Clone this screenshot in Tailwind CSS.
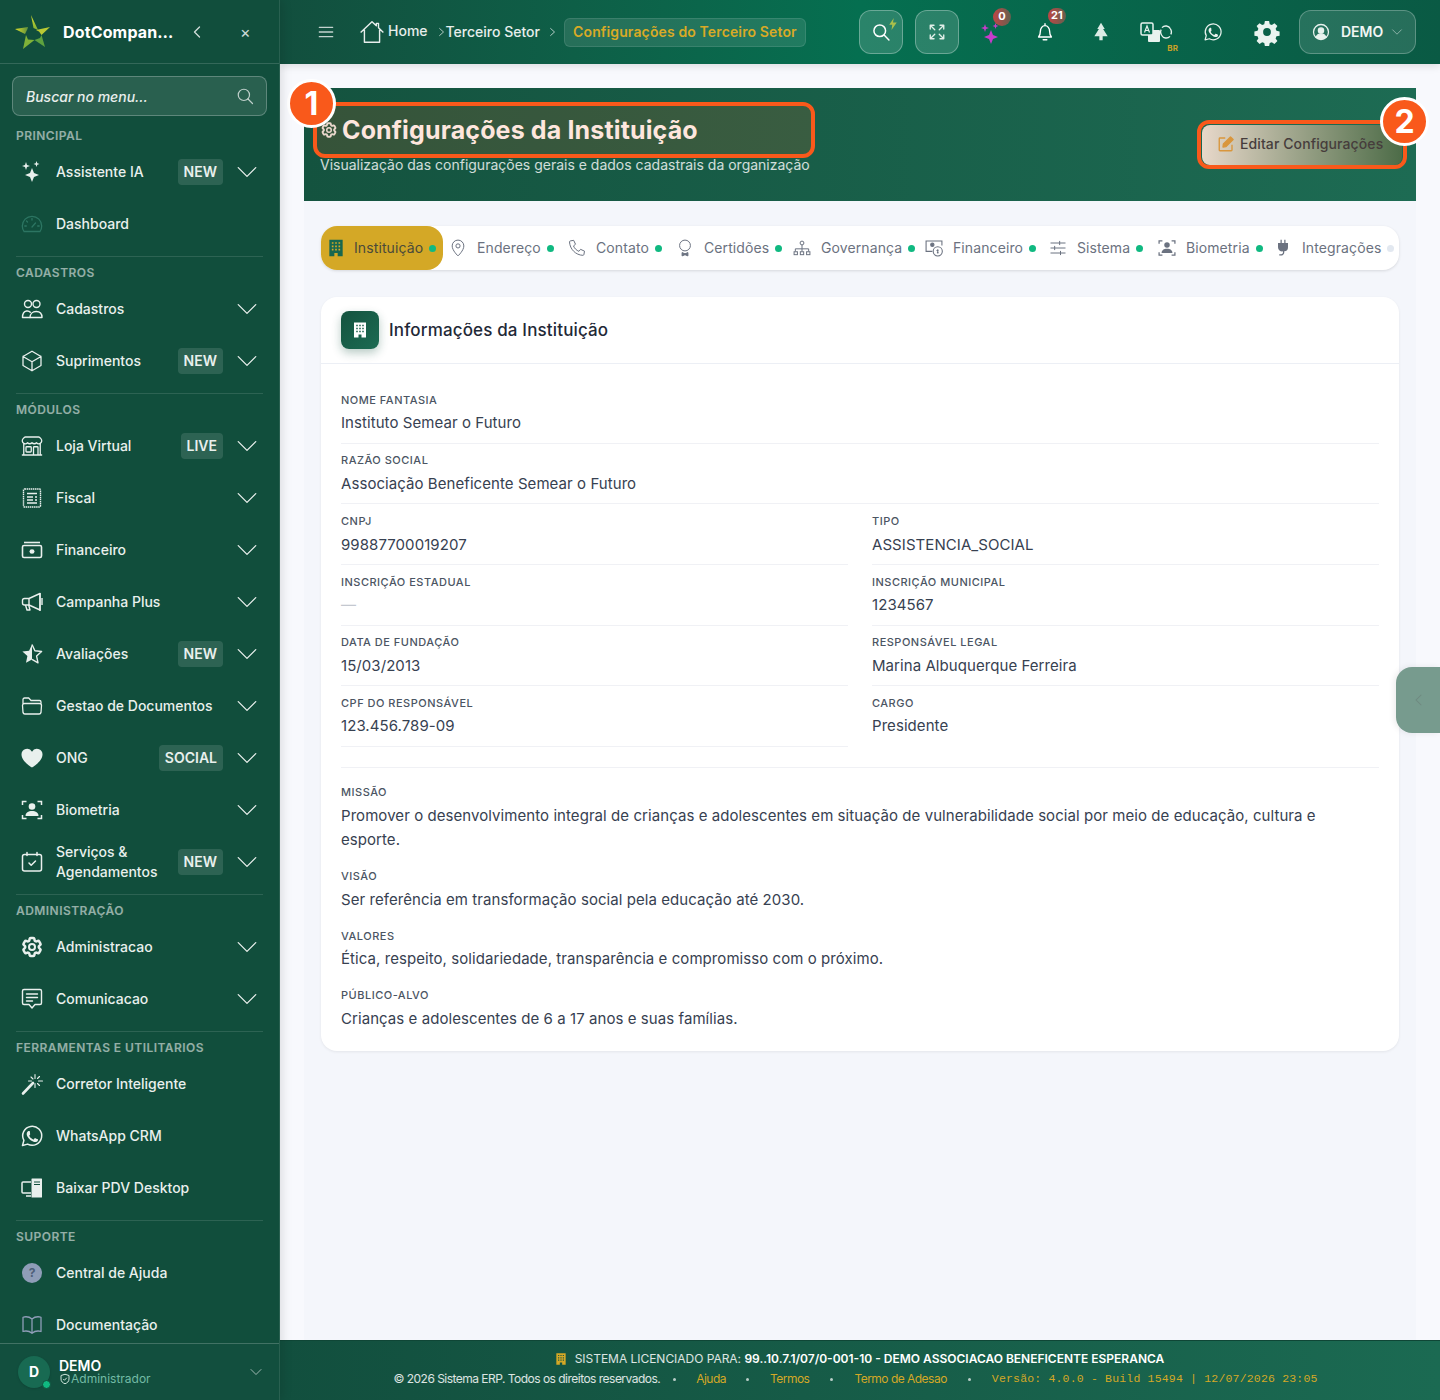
<!DOCTYPE html>
<html lang="pt-BR">
<head>
  <meta charset="UTF-8" />
  <meta name="viewport" content="width=device-width, initial-scale=1.0" />
  <title>Configurações da Instituição</title>
  <script src="https://cdn.jsdelivr.net/npm/@tailwindcss/browser@4"></script>
</head>
<body class="bg-[#f8f9fd] font-['Inter','Liberation_Sans',sans-serif] text-sm">
  <!-- shared icons -->
  <svg class="hidden" xmlns="http://www.w3.org/2000/svg">
    <symbol id="chev" viewBox="0 0 24 24"><path d="M19.5 8.25 12 15.75 4.5 8.25" fill="none" stroke="currentColor" stroke-width="1.1" stroke-linecap="round" stroke-linejoin="round"/></symbol>
    <symbol id="sparkles" viewBox="0 0 24 24"><path fill="currentColor" d="M12 8l2 5 5 2-5 2-2 5-2-5-5-2 5-2zM6 2l1 3 3 1-3 1-1 3-1-3-3-1 3-1zM16.500 1l.8 2.200 2.200.8-2.200.8-.8 2.200-.8-2.200-2.200-.8 2.200-.8z"/></symbol>
    <symbol id="gauge" viewBox="0 0 24 24"><g fill="none" stroke="currentColor" stroke-width="1.3" stroke-linecap="round"><path d="M4 19.500h16c1-1.500 1.700-3.500 1.700-5.500A9.700 9.700 0 0 0 2.300 14c0 2 .7 4 1.700 5.500z"/><path d="M12 15l3.500-4M12 6.500v1.500M6.500 9l1 1M4.800 14h1.500M17.700 14h1.500"/></g></symbol>
    <symbol id="users" viewBox="0 0 24 24"><g fill="none" stroke="currentColor" stroke-width="1.4" stroke-linecap="round" stroke-linejoin="round"><circle cx="8" cy="7" r="3.500"/><circle cx="16.500" cy="7" r="3.500"/><path d="M10 20.500H2.500c0-3 1-6 4-6.500 1.500-.2 3 .2 3.800 1.200"/><path d="M10 20.500c0-3.500 2.500-6 6.200-6 3.800 0 5.800 2.500 5.800 6z"/></g></symbol>
    <symbol id="cube" viewBox="0 0 24 24"><path fill="none" stroke="currentColor" stroke-width="1.3" stroke-linecap="round" stroke-linejoin="round" d="m21 7.500-9-5.250L3 7.500m18 0-9 5.250m9-5.250v9l-9 5.250M3 7.500l9 5.250M3 7.500v9l9 5.250m0-9v9"/></symbol>
    <symbol id="store" viewBox="0 0 24 24"><path fill="none" stroke="currentColor" stroke-width="1.3" stroke-linecap="round" stroke-linejoin="round" d="M13.500 21v-7.500a.75.75 0 0 1 .75-.75h3a.75.75 0 0 1 .75.75V21m-4.500 0H2.360m11.140 0H18m0 0h3.640m-1.390 0V9.349M3.750 21V9.349m0 0a3.001 3.001 0 0 0 3.750-.615A2.993 2.993 0 0 0 9.750 9.750c.896 0 1.700-.393 2.250-1.016a2.993 2.993 0 0 0 2.250 1.016c.896 0 1.700-.393 2.250-1.016a3.001 3.001 0 0 0 3.750.614m-16.500 0a3.004 3.004 0 0 1-.621-4.720l1.189-1.190A1.500 1.500 0 0 1 5.378 3h13.243a1.500 1.500 0 0 1 1.060.44l1.190 1.189a3 3 0 0 1-.621 4.720M6.750 18h3.750a.75.75 0 0 0 .75-.75V13.500a.75.75 0 0 0-.75-.75H6.750a.75.75 0 0 0-.75.75v3.750c0 .414.336.75.75.75Z"/></symbol>
    <symbol id="receipt" viewBox="0 0 24 24"><g fill="none" stroke="currentColor" stroke-width="1.400"><rect x="3.500" y="3" width="17" height="18" rx="1" stroke-dasharray="1.500 .6"/><path d="M7 7.500h10M7 11h6M15 11h2M7 14h6M15 14h2M7 17h10"/></g></symbol>
    <symbol id="cash" viewBox="0 0 24 24"><g fill="none" stroke="currentColor" stroke-width="1.600" stroke-linejoin="round"><rect x="2.500" y="7.500" width="19" height="12" rx="1.500"/><path d="M4 4.500h16"/></g><ellipse cx="12" cy="13.500" rx="2.500" ry="2.300" fill="currentColor"/></symbol>
    <symbol id="mega" viewBox="0 0 24 24"><g fill="none" stroke="currentColor" stroke-width="1.400" stroke-linejoin="round"><path d="M20 3.500 9 8.500H4.500A2 2 0 0 0 2.500 10.500v2.500a2 2 0 0 0 2 2H9l11 5z"/><path d="M9 8.500V15M5.500 15l1.500 5h3l-1.300-5"/><path d="M20 3v18M22 8v7"/></g></symbol>
    <symbol id="starhalf" viewBox="0 0 24 24"><path d="M12 2.500 9.100 8.700 2.400 9.500l5 4.600L6 20.800l6-3.400z" fill="currentColor"/><path d="M12 2.500l2.900 6.200 6.700.8-5 4.600 1.400 6.700-6-3.400" fill="none" stroke="currentColor" stroke-width="1.400" stroke-linejoin="round"/></symbol>
    <symbol id="folder" viewBox="0 0 24 24"><path fill="none" stroke="currentColor" stroke-width="1.300" stroke-linejoin="round" d="M3 10V5.500A1.500 1.500 0 0 1 4.500 4h4.200l2.300 2.500h8.500A1.500 1.500 0 0 1 21 8v2M4.500 9.500h15A2 2 0 0 1 21.500 11.500l-.5 7a2 2 0 0 1-2 1.500H5a2 2 0 0 1-2-1.500l-.5-7a2 2 0 0 1 2-2z"/></symbol>
    <symbol id="heart" viewBox="0 0 24 24"><path fill="currentColor" d="M12 21.500S1.500 15.500 1.500 8.500A5.600 5.600 0 0 1 12 5.700a5.600 5.600 0 0 1 10.500 2.800c0 7-10.500 13-10.500 13z"/></symbol>
    <symbol id="face" viewBox="0 0 24 24"><path fill="none" stroke="currentColor" stroke-width="1.500" d="M2.500 7V3.500h4M17.500 3.500h4V7M2.500 17v3.500h4M17.500 20.500h4V17"/><circle cx="12" cy="8.500" r="3.300" fill="currentColor"/><path fill="currentColor" d="M5.500 18c0-3.300 2.800-5 6.500-5s6.500 1.700 6.500 5z"/></symbol>
    <symbol id="calcheck" viewBox="0 0 24 24"><g fill="none" stroke="currentColor" stroke-width="1.500" stroke-linecap="round" stroke-linejoin="round"><rect x="2.500" y="4.500" width="19" height="16.500" rx="2"/><path d="M7 2.500v3M17 2.500v3M9 13l2.200 2.200L15.500 11"/></g></symbol>
    <symbol id="cog" viewBox="0 0 24 24"><path fill="none" stroke="currentColor" stroke-width="2.500" stroke-linecap="round" stroke-linejoin="round" d="M9.594 3.940c.09-.542.56-.94 1.110-.94h2.593c.55 0 1.020.398 1.110.94l.213 1.281c.063.374.313.686.645.870.074.04.147.083.22.127.325.196.72.257 1.075.124l1.217-.456a1.125 1.125 0 0 1 1.370.49l1.296 2.247a1.125 1.125 0 0 1-.26 1.431l-1.003.827c-.293.241-.438.613-.43.992a7.723 7.723 0 0 1 0 .255c-.008.378.137.75.43.991l1.004.827c.424.35.534.955.26 1.430l-1.298 2.247a1.125 1.125 0 0 1-1.369.491l-1.217-.456c-.355-.133-.75-.072-1.076.124a6.470 6.470 0 0 1-.22.128c-.331.183-.581.495-.644.869l-.213 1.281c-.09.543-.56.94-1.110.94h-2.594c-.55 0-1.019-.398-1.110-.94l-.213-1.281c-.062-.374-.312-.686-.644-.870a6.520 6.520 0 0 1-.22-.127c-.325-.196-.72-.257-1.076-.124l-1.217.456a1.125 1.125 0 0 1-1.369-.49l-1.297-2.247a1.125 1.125 0 0 1 .26-1.431l1.004-.827c.292-.24.437-.613.43-.991a6.932 6.932 0 0 1 0-.255c.007-.38-.138-.751-.43-.992l-1.004-.827a1.125 1.125 0 0 1-.26-1.430l1.297-2.247a1.125 1.125 0 0 1 1.370-.491l1.216.456c.356.133.751.072 1.076-.124.072-.044.146-.086.22-.128.332-.183.582-.495.644-.869l.214-1.280Z"/><circle cx="12" cy="12" r="3" fill="none" stroke="currentColor" stroke-width="2"/></symbol>
    <symbol id="chat" viewBox="0 0 24 24"><g fill="none" stroke="currentColor" stroke-width="1.400" stroke-linecap="round" stroke-linejoin="round"><path d="M4 2.500h16A1.500 1.500 0 0 1 21.500 4v12a1.500 1.500 0 0 1-1.500 1.500h-5L12 21l-3-3.500H4A1.500 1.500 0 0 1 2.500 16V4A1.500 1.500 0 0 1 4 2.500z"/><path d="M6.500 7h11M6.500 10.500h11M6.500 14h6"/></g></symbol>
    <symbol id="wand" viewBox="0 0 24 24"><g stroke="currentColor" stroke-linecap="round"><path d="M3 21.500 13 11" stroke-width="2.600"/><path stroke-width="1.100" fill="none" d="M15 2.500v4M15 11.500v4M8.500 9l3 0M18.500 9h4M11 5l2 2M19.500 4.500 17.500 6.500M17.500 11.500l2 2"/></g></symbol>
    <symbol id="whats" viewBox="0 0 24 24"><path fill="none" stroke="currentColor" stroke-width="1.500" stroke-linejoin="round" d="M2.500 21.500l1.400-5.100A9.500 9.500 0 1 1 7.600 20.100z"/><path fill="currentColor" d="M9 7c-.4 0-.9.100-1.300.6-.5.600-1 1.300-1 2.600s1 2.700 1.100 2.800c.1.200 2 3.100 4.800 4.300 2.300 1 2.800.8 3.300.7.500 0 1.700-.7 1.900-1.300.2-.6.200-1.200.2-1.300-.1-.1-.3-.2-.6-.3-.3-.2-1.700-.8-2-.9-.3-.1-.5-.2-.7.100-.2.300-.8.900-.9 1.100-.2.200-.3.200-.6.100-.3-.2-1.200-.5-2.300-1.400-.9-.8-1.400-1.700-1.600-2-.2-.3 0-.5.100-.6l.4-.5c.1-.2.200-.3.300-.5.100-.2.100-.4 0-.5L9.900 7.500C9.700 7 9.400 7 9 7z"/></symbol>
    <symbol id="pdv" viewBox="0 0 24 24"><path fill="none" stroke="currentColor" stroke-width="1.500" d="M11 6H3a1 1 0 0 0-1 1v9a1 1 0 0 0 1 1h8M6 20h5"/><path fill="currentColor" d="M12 2.500h9.500a.5.5 0 0 1 .5.500v18a.5.5 0 0 1-.5.5H12a.5.5 0 0 1-.5-.5V3a.5.5 0 0 1 .5-.5z"/><path stroke="#114e3c" stroke-width="1" d="M14 6h6M14 8.500h6"/></symbol>
    <symbol id="book" viewBox="0 0 24 24"><path fill="none" stroke="currentColor" stroke-width="1.300" stroke-linecap="round" stroke-linejoin="round" d="M12 6.042A8.967 8.967 0 0 0 6 3.750c-1.052 0-2.062.18-3 .512v14.250A8.987 8.987 0 0 1 6 18c2.305 0 4.408.867 6 2.292m0-14.250a8.966 8.966 0 0 1 6-2.292c1.052 0 2.062.18 3 .512v14.250A8.987 8.987 0 0 0 18 18a8.967 8.967 0 0 0-6 2.292m0-14.250v14.250"/></symbol>
    <symbol id="building" viewBox="0 0 24 24"><path fill="currentColor" fill-rule="evenodd" d="M4 2h16v20h-6v-4h-4v4H4zM7 5v2h2V5zm4 0v2h2V5zm4 0v2h2V5zM7 9v2h2V9zm4 0v2h2V9zm4 0v2h2V9zM7 13v2h2v-2zm4 0v2h2v-2zm4 0v2h2v-2z"/></symbol>
  </svg>

  <div class="flex h-[1400px] w-[1440px] overflow-hidden">
    <!-- sidebar -->
    <aside class="relative z-10 flex w-[280px] shrink-0 flex-col border-r border-white/10 bg-[#114e3c] text-[#e9f0ed] shadow-[2px_0_10px_rgba(0,0,0,0.12)]">
      <div class="flex h-[64px] shrink-0 items-center border-b border-white/15 pl-2">
        <svg class="h-[50px] w-[50px] shrink-0" viewBox="0 0 50 50">
          <defs>
            <linearGradient id="logoA" x1="0" y1="0" x2="0" y2="1"><stop offset="0" stop-color="#dfe02a"/><stop offset="1" stop-color="#7fae35"/></linearGradient>
            <linearGradient id="logoB" x1="0" y1="0" x2="1" y2="0"><stop offset="0" stop-color="#dfe02a"/><stop offset="1" stop-color="#5c8f3c"/></linearGradient>
          </defs>
          <path fill="url(#logoA)" d="M23 8 30 23 25.500 21z"/>
          <path fill="url(#logoB)" d="M7 22 20 20 19.500 22 17 27z"/>
          <path fill="#b9c934" d="M42 20 28 23 31 24.500 33.500 28z"/>
          <path fill="#5ea23f" d="M37 40 33.500 28 32 31 26.500 33z"/>
          <path fill="#7fb238" d="M15 42 26.500 33 20 32.500 18 28z"/>
        </svg>
        <span class="ml-[5px] w-[112px] text-base font-bold tracking-[0.15px] whitespace-nowrap text-white">DotCompan…</span>
        <svg class="ml-[14px] h-4 w-4 text-white/80" viewBox="0 0 24 24" fill="none" stroke="currentColor" stroke-width="2" stroke-linecap="round" stroke-linejoin="round"><path d="M15.750 19.500 8.250 12l7.500-7.500"/></svg>
        <span class="ml-[35px] text-base leading-none text-white/80">×</span>
      </div>

      <div class="mx-3 mt-3 flex h-10 shrink-0 items-center justify-between rounded-lg border border-white/25 bg-white/10 pr-3 pl-[13px]">
        <span class="pt-px text-sm font-medium text-white/90 italic">Buscar no menu...</span>
        <svg class="h-[18px] w-[18px] text-white/70" viewBox="0 0 24 24" fill="none" stroke="currentColor" stroke-width="1.600" stroke-linecap="round"><circle cx="10.500" cy="10.500" r="7.500"/><path d="m16 16 6 6"/></svg>
      </div>

      <nav class="min-h-0 flex-1 overflow-hidden text-sm font-medium">
        <p class="ml-4 mt-3 h-[16px] text-xs leading-4 font-semibold tracking-[0.45px] text-white/55">PRINCIPAL</p>
        <div class="mt-[2px] flex h-[52px] items-center pl-5 pr-[23px]">
          <svg class="mr-3 h-6 w-6 shrink-0"><use href="#sparkles"/></svg><span class="flex-1">Assistente IA</span>
          <span class="mr-[10px] rounded bg-white/12 px-[6px] py-[3px] leading-5 font-semibold">NEW</span><svg class="h-[28px] w-[28px] shrink-0 -mr-[5px]"><use href="#chev"/></svg>
        </div>
        <div class="flex h-[52px] items-center pl-5 pr-[23px]">
          <svg class="mr-3 h-6 w-6 shrink-0 text-[#2c7562]"><use href="#gauge"/></svg><span>Dashboard</span>
        </div>

        <div class="mx-4 mt-[6px] border-t border-white/12 pt-2"><p class="h-[16px] text-xs leading-4 font-semibold tracking-[0.45px] text-white/55">CADASTROS</p></div>
        <div class="mt-[2px] flex h-[52px] items-center pl-5 pr-[23px]">
          <svg class="mr-3 h-6 w-6 shrink-0"><use href="#users"/></svg><span class="flex-1">Cadastros</span>
          <svg class="h-[28px] w-[28px] shrink-0 -mr-[5px]"><use href="#chev"/></svg>
        </div>
        <div class="flex h-[52px] items-center pl-5 pr-[23px]">
          <svg class="mr-3 h-6 w-6 shrink-0"><use href="#cube"/></svg><span class="flex-1">Suprimentos</span>
          <span class="mr-[10px] rounded bg-white/12 px-[6px] py-[3px] leading-5 font-semibold">NEW</span><svg class="h-[28px] w-[28px] shrink-0 -mr-[5px]"><use href="#chev"/></svg>
        </div>

        <div class="mx-4 mt-[6px] border-t border-white/12 pt-2"><p class="h-[16px] text-xs leading-4 font-semibold tracking-[0.45px] text-white/55">MÓDULOS</p></div>
        <div class="mt-[2px] flex h-[52px] items-center pl-5 pr-[23px]">
          <svg class="mr-3 h-6 w-6 shrink-0"><use href="#store"/></svg><span class="flex-1">Loja Virtual</span>
          <span class="mr-[10px] rounded bg-white/12 px-[6px] py-[3px] leading-5 font-semibold">LIVE</span><svg class="h-[28px] w-[28px] shrink-0 -mr-[5px]"><use href="#chev"/></svg>
        </div>
        <div class="flex h-[52px] items-center pl-5 pr-[23px]">
          <svg class="mr-3 h-6 w-6 shrink-0"><use href="#receipt"/></svg><span class="flex-1">Fiscal</span>
          <svg class="h-[28px] w-[28px] shrink-0 -mr-[5px]"><use href="#chev"/></svg>
        </div>
        <div class="flex h-[52px] items-center pl-5 pr-[23px]">
          <svg class="mr-3 h-6 w-6 shrink-0"><use href="#cash"/></svg><span class="flex-1">Financeiro</span>
          <svg class="h-[28px] w-[28px] shrink-0 -mr-[5px]"><use href="#chev"/></svg>
        </div>
        <div class="flex h-[52px] items-center pl-5 pr-[23px]">
          <svg class="mr-3 h-6 w-6 shrink-0"><use href="#mega"/></svg><span class="flex-1">Campanha Plus</span>
          <svg class="h-[28px] w-[28px] shrink-0 -mr-[5px]"><use href="#chev"/></svg>
        </div>
        <div class="flex h-[52px] items-center pl-5 pr-[23px]">
          <svg class="mr-3 h-6 w-6 shrink-0"><use href="#starhalf"/></svg><span class="flex-1">Avaliações</span>
          <span class="mr-[10px] rounded bg-white/12 px-[6px] py-[3px] leading-5 font-semibold">NEW</span><svg class="h-[28px] w-[28px] shrink-0 -mr-[5px]"><use href="#chev"/></svg>
        </div>
        <div class="flex h-[52px] items-center pl-5 pr-[23px]">
          <svg class="mr-3 h-6 w-6 shrink-0"><use href="#folder"/></svg><span class="flex-1">Gestao de Documentos</span>
          <svg class="h-[28px] w-[28px] shrink-0 -mr-[5px]"><use href="#chev"/></svg>
        </div>
        <div class="flex h-[52px] items-center pl-5 pr-[23px]">
          <svg class="mr-3 h-6 w-6 shrink-0"><use href="#heart"/></svg><span class="flex-1">ONG</span>
          <span class="mr-[10px] rounded bg-white/12 px-[6px] py-[3px] leading-5 font-semibold">SOCIAL</span><svg class="h-[28px] w-[28px] shrink-0 -mr-[5px]"><use href="#chev"/></svg>
        </div>
        <div class="flex h-[52px] items-center pl-5 pr-[23px]">
          <svg class="mr-3 h-6 w-6 shrink-0"><use href="#face"/></svg><span class="flex-1">Biometria</span>
          <svg class="h-[28px] w-[28px] shrink-0 -mr-[5px]"><use href="#chev"/></svg>
        </div>
        <div class="flex h-[52px] items-center pl-5 pr-[23px]">
          <svg class="mr-3 h-6 w-6 shrink-0"><use href="#calcheck"/></svg><span class="flex-1 leading-5">Serviços &amp;<br>Agendamentos</span>
          <span class="mr-[10px] rounded bg-white/12 px-[6px] py-[3px] leading-5 font-semibold">NEW</span><svg class="h-[28px] w-[28px] shrink-0 -mr-[5px]"><use href="#chev"/></svg>
        </div>

        <div class="mx-4 mt-[6px] border-t border-white/12 pt-2"><p class="h-[16px] text-xs leading-4 font-semibold tracking-[0.45px] text-white/55">ADMINISTRAÇÃO</p></div>
        <div class="mt-[2px] flex h-[52px] items-center pl-5 pr-[23px]">
          <svg class="mr-3 h-6 w-6 shrink-0"><use href="#cog"/></svg><span class="flex-1">Administracao</span>
          <svg class="h-[28px] w-[28px] shrink-0 -mr-[5px]"><use href="#chev"/></svg>
        </div>
        <div class="flex h-[52px] items-center pl-5 pr-[23px]">
          <svg class="mr-3 h-6 w-6 shrink-0"><use href="#chat"/></svg><span class="flex-1">Comunicacao</span>
          <svg class="h-[28px] w-[28px] shrink-0 -mr-[5px]"><use href="#chev"/></svg>
        </div>

        <div class="mx-4 mt-[6px] border-t border-white/12 pt-2"><p class="h-[16px] text-xs leading-4 font-semibold tracking-[0.45px] text-white/55">FERRAMENTAS E UTILITARIOS</p></div>
        <div class="mt-[2px] flex h-[52px] items-center pl-5 pr-[23px]">
          <svg class="mr-3 h-6 w-6 shrink-0"><use href="#wand"/></svg><span>Corretor Inteligente</span>
        </div>
        <div class="flex h-[52px] items-center pl-5 pr-[23px]">
          <svg class="mr-3 h-6 w-6 shrink-0"><use href="#whats"/></svg><span>WhatsApp CRM</span>
        </div>
        <div class="flex h-[52px] items-center pl-5 pr-[23px]">
          <svg class="mr-3 h-6 w-6 shrink-0"><use href="#pdv"/></svg><span>Baixar PDV Desktop</span>
        </div>

        <div class="mx-4 mt-[6px] border-t border-white/12 pt-2"><p class="h-[16px] text-xs leading-4 font-semibold tracking-[0.45px] text-white/55">SUPORTE</p></div>
        <div class="mt-[2px] flex h-[52px] items-center pl-5 pr-[23px]">
          <span class="ml-[2px] mr-[14px] flex h-5 w-5 shrink-0 items-center justify-center rounded-full bg-[#8f9db8] text-xs font-bold text-[#4e5f78]">?</span><span>Central de Ajuda</span>
        </div>
        <div class="flex h-[52px] items-center pl-5 pr-[23px]">
          <svg class="mr-3 h-6 w-6 shrink-0 text-[#8f9db8]"><use href="#book"/></svg><span>Documentação</span>
        </div>
      </nav>

      <div class="flex h-[57px] shrink-0 items-center border-t border-white/20 bg-[#124f3e] pl-[18px] pr-[15px]">
        <div class="relative flex h-8 w-8 shrink-0 items-center justify-center rounded-full bg-[#186a52] text-sm font-bold text-white shadow">D
          <span class="absolute -right-[1px] -bottom-[1px] h-[9px] w-[9px] rounded-full border border-[#114e3c] bg-[#10b981]"></span>
        </div>
        <div class="ml-[9px] flex-1">
          <p class="text-sm leading-[14px] font-semibold text-white">DEMO</p>
          <p class="flex items-center text-xs leading-[12px] text-[#73bba5]"><svg class="h-3 w-3 text-[#cfe6dd]" viewBox="0 0 24 24" fill="none" stroke="currentColor" stroke-width="2" stroke-linejoin="round"><path d="M12 2.500 4 5v7c0 5 3.500 8 8 9.500 4.500-1.500 8-4.500 8-9.500V5z"/><path d="m8.500 12 2.500 2.500 4.500-5"/></svg>Administrador</p>
        </div>
        <svg class="h-4 w-4 text-white/80"><use href="#chev"/></svg>
      </div>
    </aside>

    <!-- right column -->
    <div class="flex min-w-0 flex-1 flex-col">
      <header class="relative z-[5] flex h-[64px] shrink-0 items-center bg-linear-to-r from-[#124f3e] via-[#056f50] to-[#0a5a44] pl-[38px] text-white shadow-[0_2px_8px_rgba(0,0,0,0.12)]">
        <svg class="h-[16px] w-[16px] text-white/75" viewBox="0 0 24 24" fill="none" stroke="currentColor" stroke-width="2" stroke-linecap="round"><path d="M2 5h20M2 12h20M2 19h20"/></svg>
        <svg class="ml-[25px] h-[26px] w-[26px] text-white/90" viewBox="0 0 24 24" fill="none" stroke="currentColor" stroke-width="1.300" stroke-linejoin="round"><path d="M1.500 12.500 12 2.500l4 3.800V4h2v4.100l4.500 4.400M5 10v11.500h14V10"/></svg>
        <span class="-mt-[3px] ml-[3px] font-medium text-white/90">Home</span>
        <svg class="ml-2 h-[10px] w-[10px] text-white/80" viewBox="0 0 24 24" fill="none" stroke="currentColor" stroke-width="2"><path d="m8 3 10 9-10 9"/></svg>
        <span class="-mt-px font-medium text-white/90">Terceiro Setor</span>
        <svg class="ml-[7px] h-[10px] w-[10px] text-white/80" viewBox="0 0 24 24" fill="none" stroke="currentColor" stroke-width="2"><path d="m8 3 10 9-10 9"/></svg>
        <span class="ml-[7px] flex h-[29px] w-[242px] items-center justify-center rounded-md border border-white/10 bg-white/10 font-semibold tracking-[0.13px] text-[#d9aa26]">Configurações do Terceiro Setor</span>

        <div class="relative ml-[53px] flex h-[44px] w-[44px] items-center justify-center rounded-xl border border-white/30 bg-white/15">
          <svg class="h-5 w-5" viewBox="0 0 24 24" fill="none" stroke="currentColor" stroke-width="1.800" stroke-linecap="round"><circle cx="10.500" cy="10.500" r="7"/><path d="m16 16 5.500 5.500"/></svg>
          <svg class="absolute top-[7px] right-[5px] h-3 w-2" viewBox="0 0 10 16" fill="#a9bf4b"><path d="M6 0 0 9h4l-1 7 7-10H5z"/></svg>
        </div>
        <div class="ml-[12px] flex h-[44px] w-[44px] items-center justify-center rounded-xl border border-white/30 bg-white/15">
          <svg class="h-[18px] w-[18px] text-[#e3efe9]" viewBox="0 0 24 24" fill="none" stroke="currentColor" stroke-width="1.800" stroke-linecap="round" stroke-linejoin="round"><path d="M3 8V3h5M3 3l6 6M21 8V3h-5M21 3l-6 6M3 16v5h5M3 21l6-6M21 16v5h-5M21 21l-6-6"/></svg>
        </div>
        <div class="relative ml-[20px] h-[44px] w-[30px]">
          <svg class="absolute top-[12px] left-0 h-[24px] w-[24px] text-[#c73ccb]"><use href="#sparkles"/></svg>
          <span class="absolute -top-[2px] left-[14px] flex h-[18px] w-[18px] items-center justify-center rounded-full bg-linear-to-r from-[#c04545] to-[#a05a50]/60 text-[11px] font-bold">0</span>
        </div>
        <div class="relative ml-[25px] flex h-[44px] w-[22px] items-center justify-center">
          <svg class="h-[22px] w-[22px]" viewBox="0 0 24 24" fill="none" stroke="currentColor" stroke-width="1.500" stroke-linecap="round" stroke-linejoin="round"><path d="M5 17.500h14c-1.300-1.500-2-2.500-2-6.500 0-3-2-6-5-6s-5 3-5 6c0 4-.7 5-2 6.500zM10 20.500h4M12 3v2"/></svg>
          <span class="absolute -top-[2px] left-[14px] flex h-[16px] w-[18px] items-center justify-center rounded-full bg-linear-to-r from-[#c04545] to-[#a05a50]/60 text-[11px] font-bold">21</span>
        </div>
        <svg class="ml-[35px] h-[20px] w-[20px] text-[#dcebe5]" viewBox="0 0 24 24" fill="currentColor"><path d="M12 1 7.500 8.500h2L4 17h6v5h4v-5h6l-5.500-8.500h2z"/></svg>
        <div class="relative ml-[29px] flex h-[44px] w-[34px] items-center">
          <svg class="h-[20px] w-[20px] shrink-0" viewBox="0 0 20 20" fill="none"><path fill="#e8f2ee" d="M8 8h11a1 1 0 0 1 1 1v10a1 1 0 0 1-1 1H9a1 1 0 0 1-1-1z"/><rect x="1" y="1" width="12" height="12" rx="1.500" fill="#066a4e" stroke="#e8f2ee" stroke-width="1.500"/><path d="M4.500 10.500 7 4l2.500 6.500M5.500 8.500h3" stroke="#e8f2ee" stroke-width="1.200"/></svg>
          <svg class="-ml-[1px] h-[16px] w-[14px] shrink-0 text-[#e8f2ee]" viewBox="0 0 16 20" fill="none" stroke="currentColor" stroke-width="1.700"><path d="M13.500 6A6.500 6.500 0 0 0 3 4.500M2.500 14A6.500 6.500 0 0 0 13 15.500M2 7a7 7 0 0 0 .5 7M14 13a7 7 0 0 0-.5-7"/></svg>
          <span class="absolute -right-[4px] bottom-[2px] text-[8px] leading-none font-bold text-[#c9a227]">BR</span>
        </div>
        <svg class="ml-[29px] h-[20px] w-[20px] text-[#e8f2ee]"><use href="#whats"/></svg>
        <svg class="ml-[30px] h-[28px] w-[28px] text-[#eaf3ef]" viewBox="0 0 24 24" fill="currentColor"><path fill-rule="evenodd" d="M10 1.500h4l.6 3 2 .8 2.500-1.700 2.800 2.800-1.700 2.500.8 2 3 .6v4l-3 .6-.8 2 1.700 2.500-2.800 2.800-2.500-1.700-2 .8-.6 3h-4l-.6-3-2-.8-2.500 1.700-2.800-2.800 1.700-2.500-.8-2-3-.6v-4l3-.6.8-2-1.700-2.500 2.800-2.800 2.500 1.700 2-.8zM12 8.300a3.700 3.700 0 1 0 0 7.400 3.700 3.700 0 0 0 0-7.400z" transform="translate(1.200 1.200) scale(.9)"/></svg>
        <div class="ml-[18px] flex h-[44px] w-[117px] items-center rounded-xl border border-white/25 bg-white/12 pl-[12px]">
          <svg class="h-[18px] w-[18px] text-[#e8f2ee]" viewBox="0 0 24 24" fill="none" stroke="currentColor" stroke-width="1.700"><circle cx="12" cy="12" r="10"/><circle cx="12" cy="10" r="3.500" fill="currentColor"/><path fill="currentColor" d="M5.500 19c1-3 3.500-4.500 6.500-4.500s5.500 1.500 6.500 4.500c-2 1.500-4 2.200-6.500 2.200s-4.500-.7-6.500-2.200z"/></svg>
          <span class="ml-[11px] font-semibold text-[#f1f6f4]">DEMO</span>
          <svg class="ml-[7px] h-[14px] w-[14px] text-white/70"><use href="#chev"/></svg>
        </div>
      </header>

      <main class="flex min-h-0 flex-1 flex-col pt-6">
        <section class="relative mx-6 flex h-[113px] shrink-0 justify-between bg-linear-to-r from-[#14533f] to-[#1d6b53] pl-4 text-white">
          <div class="mt-[27px]">
            <div class="flex h-[30px] items-center">
              <svg class="h-[18px] w-[18px] text-white/90"><use href="#cog"/></svg>
              <h1 class="ml-1 text-[25px] leading-[30px] font-bold tracking-[0.14px]">Configurações da Instituição</h1>
            </div>
            <p class="mt-[10px] leading-5 text-white/80">Visualização das configurações gerais e dados cadastrais da organização</p>
          </div>
          <div class="mt-[37px] mr-[14px] flex h-10 w-[200px] items-center rounded-lg bg-linear-to-r from-[#e8d8ca] to-[#4d6c48] pb-[2px] pl-[15px] font-medium tracking-[0.1px] text-[#463d3c]">
            <svg class="h-[18px] w-[18px] text-[#d9963c]" viewBox="0 0 24 24" fill="none" stroke="currentColor" stroke-width="1.800" stroke-linejoin="round"><path d="M11 4H4a1 1 0 0 0-1 1v15a1 1 0 0 0 1 1h15a1 1 0 0 0 1-1v-7"/><path d="M18 2.500 21.500 6 12 15.500l-4 .5.500-4z" fill="currentColor"/></svg>
            <span class="ml-[5px] whitespace-nowrap">Editar Configurações</span>
          </div>
          <!-- annotations -->
          <div class="absolute top-[14px] left-[9px] h-[56px] w-[502px] rounded-xl border-4 border-[#f9591b] bg-[#f9591b]/15"></div>
          <div class="absolute top-[32px] right-[9px] h-[49px] w-[210px] rounded-xl border-4 border-[#f9591b]"></div>
          <span class="absolute -top-[9px] -left-[17px] flex h-[49px] w-[49px] items-center justify-center rounded-full border-[3px] border-white bg-[#f9591b] text-[32px] leading-none font-bold text-white">1</span>
          <span class="absolute top-[9px] -right-[13px] flex h-[49px] w-[49px] items-center justify-center rounded-full border-[3px] border-white bg-[#f9591b] text-[32px] leading-none font-bold text-white">2</span>
        </section>

        <div class="mx-6 min-h-0 flex-1 bg-[#f4f6fb] px-[17px] pt-[25px]">
          <!-- tabs -->
          <div class="flex h-[44px] rounded-2xl bg-white tracking-[0.1px] text-[#6b7280] shadow-[0_1px_3px_rgba(0,0,0,0.12)]">
            <div class="flex h-[44px] w-[122px] items-center rounded-2xl bg-[#d4a826] pl-[5px] text-[#4a4a3a]">
              <svg class="h-5 w-5 text-[#17674f]"><use href="#building"/></svg><span class="ml-2">Instituição</span><span class="ml-[6px] h-[7px] w-[7px] rounded-full bg-[#10b981]"></span>
            </div>
            <div class="flex w-[119px] items-center pl-[5px]">
              <svg class="h-5 w-5" viewBox="0 0 24 24" fill="none" stroke="currentColor" stroke-width="1.200"><path d="M12 21.500s-7-6.500-7-12a7 7 0 0 1 14 0c0 5.500-7 12-7 12z"/><circle cx="12" cy="9.500" r="2.500"/></svg><span class="ml-[9px]">Endereço</span><span class="ml-[6px] h-[7px] w-[7px] rounded-full bg-[#10b981]"></span>
            </div>
            <div class="flex w-[108px] items-center pl-[5px]">
              <svg class="h-5 w-5" viewBox="0 0 24 24" fill="none" stroke="currentColor" stroke-width="1.200" stroke-linejoin="round"><path d="M4 3.500 8 2.800l2.200 4.700-2.400 2c1.200 3 3.500 5.300 6.500 6.500l2-2.400 4.700 2.200-.7 4c-.1.600-.6 1-1.200 1C10.500 20.500 3.500 13.500 3 4.700c0-.6.400-1.100 1-1.200z"/></svg><span class="ml-[9px]">Contato</span><span class="ml-[6px] h-[7px] w-[7px] rounded-full bg-[#10b981]"></span>
            </div>
            <div class="flex w-[117px] items-center pl-[5px]">
              <svg class="h-5 w-5" viewBox="0 0 24 24" fill="none" stroke="currentColor" stroke-width="1.200"><circle cx="12" cy="9" r="6.500"/><path fill="currentColor" d="M8.500 17.500 12 19l3.500-1.500v4L12 20l-3.500 1.500z"/></svg><span class="ml-[9px]">Certidões</span><span class="ml-[6px] h-[7px] w-[7px] rounded-full bg-[#10b981]"></span>
            </div>
            <div class="flex w-[132px] items-center pl-[5px]">
              <svg class="h-5 w-5" viewBox="0 0 24 24" fill="none" stroke="currentColor" stroke-width="1.200"><circle cx="12" cy="6" r="2.300"/><path d="M12 8.300V13M4 16v-3h16v3M12 13v3"/><rect x="2.500" y="16.500" width="4" height="3.500"/><rect x="10" y="16.500" width="4" height="3.500"/><rect x="17.500" y="16.500" width="4" height="3.500"/></svg><span class="ml-[9px]">Governança</span><span class="ml-[6px] h-[7px] w-[7px] rounded-full bg-[#10b981]"></span>
            </div>
            <div class="flex w-[124px] items-center pl-[5px]">
              <svg class="h-5 w-5" viewBox="0 0 24 24" fill="none" stroke="currentColor" stroke-width="1.300"><path d="M10 16H2.500V3.500h19V9" /><circle cx="10" cy="8" r="2" fill="currentColor"/><circle cx="16.500" cy="16" r="5.500"/><path d="M16.500 13.500v5M15 15h2.500M15.500 17.500h2"/></svg><span class="ml-[9px]">Financeiro</span><span class="ml-[6px] h-[7px] w-[7px] rounded-full bg-[#10b981]"></span>
            </div>
            <div class="flex w-[109px] items-center pl-[5px]">
              <svg class="h-5 w-5" viewBox="0 0 24 24" fill="none" stroke="currentColor" stroke-width="1.200"><path d="M3 6h18M3 12h18M3 18h18M14 3.500v5M8 9.500v5M15 15.500v5"/></svg><span class="ml-[9px]">Sistema</span><span class="ml-[6px] h-[7px] w-[7px] rounded-full bg-[#10b981]"></span>
            </div>
            <div class="flex w-[116px] items-center pl-[5px]">
              <svg class="h-5 w-5"><use href="#face"/></svg><span class="ml-[9px]">Biometria</span><span class="ml-[6px] h-[7px] w-[7px] rounded-full bg-[#10b981]"></span>
            </div>
            <div class="flex items-center pl-[5px]">
              <svg class="h-5 w-5" viewBox="0 0 24 24" fill="currentColor"><path d="M9 2h1.500v4h3V2H15v4h3v5a5 5 0 0 1-4.500 5v1.500c0 2-1.500 3.500-3.500 3.500H7.500v-1.500H10c1 0 2-1 2-2V16a5 5 0 0 1-6-5V6h3z"/></svg><span class="ml-[9px]">Integrações</span><span class="ml-[6px] h-[7px] w-[7px] rounded-full bg-[#e2e8f0]"></span>
            </div>
          </div>

          <!-- info card -->
          <div class="mt-[27px] h-[754px] rounded-2xl bg-white shadow-[0_1px_3px_rgba(0,0,0,0.07)]">
            <div class="flex h-[67px] items-center border-b border-[#eceff5] pl-5">
              <div class="flex h-[38px] w-[38px] items-center justify-center rounded-lg bg-linear-to-br from-[#14533f] to-[#1d6b53] text-white shadow-[0_4px_10px_rgba(20,83,63,0.3)]">
                <svg class="h-[18px] w-[18px]"><use href="#building"/></svg>
              </div>
              <h2 class="ml-[10px] text-[17px] font-medium tracking-[0.15px] text-[#1f2937]">Informações da Instituição</h2>
            </div>

            <div class="px-5 pt-[28.7px] text-[15px] leading-6 tracking-[0.065px] text-[#374151]">
              <div class="grid auto-rows-[60.67px] grid-cols-2 gap-x-6">
                <div class="col-span-2">
                  <p class="h-[15px] text-[11px] leading-[15px] font-medium tracking-[0.5px] text-[#4b5563] uppercase">Nome Fantasia</p>
                  <p class="mt-[3.5px] h-[32.5px] border-b border-[#f0f1f5]">Instituto Semear o Futuro</p>
                </div>
                <div class="col-span-2">
                  <p class="h-[15px] text-[11px] leading-[15px] font-medium tracking-[0.5px] text-[#4b5563] uppercase">Razão Social</p>
                  <p class="mt-[3.5px] h-[32.5px] border-b border-[#f0f1f5]">Associação Beneficente Semear o Futuro</p>
                </div>
                <div>
                  <p class="h-[15px] text-[11px] leading-[15px] font-medium tracking-[0.5px] text-[#4b5563] uppercase">CNPJ</p>
                  <p class="mt-[3.5px] h-[32.5px] border-b border-[#f0f1f5]">99887700019207</p>
                </div>
                <div>
                  <p class="h-[15px] text-[11px] leading-[15px] font-medium tracking-[0.5px] text-[#4b5563] uppercase">Tipo</p>
                  <p class="mt-[3.5px] h-[32.5px] border-b border-[#f0f1f5]">ASSISTENCIA_SOCIAL</p>
                </div>
                <div>
                  <p class="h-[15px] text-[11px] leading-[15px] font-medium tracking-[0.5px] text-[#4b5563] uppercase">Inscrição Estadual</p>
                  <p class="mt-[3.5px] h-[32.5px] border-b border-[#f0f1f5] text-[#c4c8d0]">—</p>
                </div>
                <div>
                  <p class="h-[15px] text-[11px] leading-[15px] font-medium tracking-[0.5px] text-[#4b5563] uppercase">Inscrição Municipal</p>
                  <p class="mt-[3.5px] h-[32.5px] border-b border-[#f0f1f5]">1234567</p>
                </div>
                <div>
                  <p class="h-[15px] text-[11px] leading-[15px] font-medium tracking-[0.5px] text-[#4b5563] uppercase">Data de Fundação</p>
                  <p class="mt-[3.5px] h-[32.5px] border-b border-[#f0f1f5]">15/03/2013</p>
                </div>
                <div>
                  <p class="h-[15px] text-[11px] leading-[15px] font-medium tracking-[0.5px] text-[#4b5563] uppercase">Responsável Legal</p>
                  <p class="mt-[3.5px] h-[32.5px] border-b border-[#f0f1f5]">Marina Albuquerque Ferreira</p>
                </div>
                <div>
                  <p class="h-[15px] text-[11px] leading-[15px] font-medium tracking-[0.5px] text-[#4b5563] uppercase">CPF do Responsável</p>
                  <p class="mt-[3.5px] h-[32.5px] border-b border-[#f0f1f5]">123.456.789-09</p>
                </div>
                <div>
                  <p class="h-[15px] text-[11px] leading-[15px] font-medium tracking-[0.5px] text-[#4b5563] uppercase">Cargo</p>
                  <p class="mt-[3.5px] h-[32.5px]">Presidente</p>
                </div>
              </div>

              <div class="mt-[10.3px] border-t border-[#f0f1f5] pt-[17px]">
                <p class="h-[15px] text-[11px] leading-[15px] font-medium tracking-[0.5px] text-[#4b5563] uppercase">Missão</p>
                <p class="mt-[4px] mb-[17px] max-w-[1000px]">Promover o desenvolvimento integral de crianças e adolescentes em situação de vulnerabilidade social por meio de educação, cultura e esporte.</p>
                <p class="h-[15px] text-[11px] leading-[15px] font-medium tracking-[0.5px] text-[#4b5563] uppercase">Visão</p>
                <p class="mt-[4px] mb-[17px]">Ser referência em transformação social pela educação até 2030.</p>
                <p class="h-[15px] text-[11px] leading-[15px] font-medium tracking-[0.5px] text-[#4b5563] uppercase">Valores</p>
                <p class="mt-[3px] mb-[17px]">Ética, respeito, solidariedade, transparência e compromisso com o próximo.</p>
                <p class="h-[15px] text-[11px] leading-[15px] font-medium tracking-[0.5px] text-[#4b5563] uppercase">Público-alvo</p>
                <p class="mt-[4.5px]">Crianças e adolescentes de 6 a 17 anos e suas famílias.</p>
              </div>
            </div>
          </div>
        </div>
      </main>

      <footer class="flex h-[60px] shrink-0 flex-col items-center border-t border-[#0f4636] bg-linear-to-r from-[#124f3e] to-[#1b6a52] pt-2 text-xs text-white/85">
        <p class="flex h-[20px] items-center pr-[2px] tracking-[-0.03px]"><svg class="mr-[7px] h-[14px] w-[14px] text-[#d4a826]"><use href="#building"/></svg>SISTEMA LICENCIADO PARA:&nbsp;<b class="font-semibold tracking-normal text-white">99..10.7.1/07/0-001-10 - DEMO ASSOCIACAO BENEFICENTE ESPERANCA</b></p>
        <p class="mr-[9px] flex h-[20px] items-center tracking-[-0.52px]">© 2026 Sistema ERP. Todos os direitos reservados.
          <span class="mr-5 ml-[13px] h-[3px] w-[3px] rounded-full bg-white/70"></span><span class="text-[#d4a826]">Ajuda</span>
          <span class="mr-[21px] ml-5 h-[3px] w-[3px] rounded-full bg-white/70"></span><span class="text-[#d4a826]">Termos</span>
          <span class="mx-[21px] h-[3px] w-[3px] rounded-full bg-white/70"></span><span class="text-[#d4a826]">Termo de Adesao</span>
          <span class="mx-[21px] h-[3px] w-[3px] rounded-full bg-white/70"></span><span class="font-['Liberation_Mono',monospace] text-[11.5px] tracking-[0.18px] text-[#d4a826]">Versão: 4.0.0 - Build 15494 | 12/07/2026 23:05</span>
        </p>
      </footer>
    </div>

    <!-- floating side tab -->
    <div class="absolute top-[667px] left-[1396px] flex h-[66px] w-[44px] items-center rounded-l-2xl bg-[#779b8e] pl-[16px] text-[#6f8a80] shadow-[-2px_0_6px_rgba(0,0,0,0.08)]">
      <svg class="h-[14px] w-[14px]" viewBox="0 0 24 24" fill="none" stroke="currentColor" stroke-width="1.800"><path d="M16 3 7 12l9 9"/></svg>
    </div>
  </div>
</body>
</html>
